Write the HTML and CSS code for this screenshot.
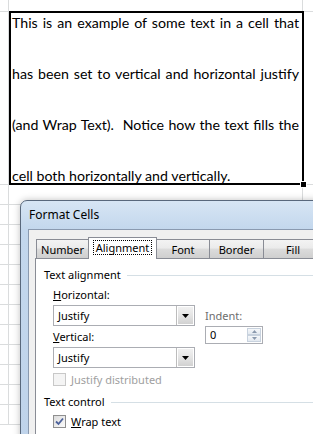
FILE: index.html
```html
<!DOCTYPE html>
<html lang="en">
<head>
    <meta charset="UTF-8">
    <meta name="viewport" content="width=device-width, initial-scale=1.0">
    <title>Format Cells - Justify</title>
    <link rel="stylesheet" href="styles.css">
</head>
<body>
    <div class="sheet">
        <div class="row row-top">
            <div class="c col-a"></div><div class="c col-b"></div><div class="c col-c"></div>
        </div>
        <div class="row row-tall">
            <div class="c col-a"></div>
            <div class="c col-b">
                <div class="cell-text">
                    <div class="line">This is an example of some text in a cell that</div>
                    <div class="line">has been set to vertical and horizontal justify</div>
                    <div class="line">(and Wrap Text).&nbsp; Notice how the text fills the</div>
                    <div class="line last">cell both horizontally and vertically.</div>
                </div>
            </div>
            <div class="c col-c"></div>
        </div>
        <div class="row"><div class="c col-a"></div><div class="c col-b"></div><div class="c col-c"></div></div>
        <div class="row"><div class="c col-a"></div><div class="c col-b"></div><div class="c col-c"></div></div>
        <div class="row"><div class="c col-a"></div><div class="c col-b"></div><div class="c col-c"></div></div>
        <div class="row"><div class="c col-a"></div><div class="c col-b"></div><div class="c col-c"></div></div>
        <div class="row"><div class="c col-a"></div><div class="c col-b"></div><div class="c col-c"></div></div>
        <div class="row"><div class="c col-a"></div><div class="c col-b"></div><div class="c col-c"></div></div>
        <div class="row"><div class="c col-a"></div><div class="c col-b"></div><div class="c col-c"></div></div>
        <div class="row"><div class="c col-a"></div><div class="c col-b"></div><div class="c col-c"></div></div>
        <div class="row"><div class="c col-a"></div><div class="c col-b"></div><div class="c col-c"></div></div>
        <div class="row"><div class="c col-a"></div><div class="c col-b"></div><div class="c col-c"></div></div>
        <div class="row"><div class="c col-a"></div><div class="c col-b"></div><div class="c col-c"></div></div>
        <div class="row"><div class="c col-a"></div><div class="c col-b"></div><div class="c col-c"></div></div>

        <!-- active cell outline -->
        <div class="selection"><span class="fill-handle"></span></div>

        <!-- Format Cells dialog -->
        <div class="dialog">
            <div class="titlebar">Format Cells</div>
            <div class="client">
                <div class="tabs">
                    <div class="tab tab-number">Number</div>
                    <div class="tab tab-align active"><span class="focus">Alignment</span></div>
                    <div class="tab tab-font">Font</div>
                    <div class="tab tab-border">Border</div>
                    <div class="tab tab-fill">Fill</div>
                </div>
                <div class="panel">
                    <div class="group"><span>Text alignment</span><span class="rule"></span></div>

                    <div class="align-row">
                        <div class="left-col">
                            <div class="label"><u>H</u>orizontal:</div>
                            <div class="combo">
                                <span class="value">Justify</span>
                                <span class="drop"><svg width="7" height="4" viewBox="0 0 7 4"><path d="M0 0h7L3.5 4z" fill="#000"/></svg></span>
                            </div>
                            <div class="label label-gap"><u>V</u>ertical:</div>
                            <div class="combo">
                                <span class="value">Justify</span>
                                <span class="drop"><svg width="7" height="4" viewBox="0 0 7 4"><path d="M0 0h7L3.5 4z" fill="#000"/></svg></span>
                            </div>
                        </div>
                        <div class="indent-col">
                            <div class="label dim">Indent:</div>
                            <div class="spin">
                                <span class="value">0</span>
                                <span class="spin-btns">
                                    <span class="spin-btn"><svg width="5" height="3" viewBox="0 0 5 3"><path d="M0 3h5L2.5 0z" fill="#8a99ad"/></svg></span>
                                    <span class="spin-btn"><svg width="5" height="3" viewBox="0 0 5 3"><path d="M0 0h5L2.5 3z" fill="#8a99ad"/></svg></span>
                                </span>
                            </div>
                        </div>
                    </div>

                    <div class="check disabled">
                        <span class="box"></span>
                        <span>Justify distributed</span>
                    </div>

                    <div class="group group-2"><span>Text control</span><span class="rule"></span></div>

                    <div class="check checked">
                        <span class="box"><svg width="9" height="9" viewBox="0 0 9 9"><path d="M1 4.5l2.5 2.5L8 1.5" fill="none" stroke="#4c619b" stroke-width="1.8"/></svg></span>
                        <span><u>W</u>rap text</span>
                    </div>
                </div>
            </div>
        </div>
    </div>
</body>
</html>
```

FILE: styles.css
```css
body {
    margin: 0;
    background: #fff;
}

.sheet {
    position: relative;
    width: 313px;
    height: 434px;
    overflow: hidden;
    font-family: Lato, "Open Sans", sans-serif;
}

/* grille du tableur */
.row {
    display: grid;
    grid-template-columns: 9px 294px 1fr;
    height: 20px;
    box-sizing: border-box;
    border-bottom: 1px solid #dadcdd;
}

.row-top {
    height: 12px;
}

.row-tall {
    height: 173px;
}

.c {
    border-right: 1px solid #dadcdd;
    box-sizing: border-box;
}

.col-c {
    border-right: none;
}

.cell-text {
    height: 100%;
    box-sizing: border-box;
    padding: 2px 3px 0 3px;
    display: flex;
    flex-direction: column;
    justify-content: space-between;
    font-size: 14.2px;
    line-height: 17px;
    color: #000;
}

.line {
    text-align: justify;
    text-align-last: justify;
    white-space: nowrap;
}

.line.last {
    text-align: left;
    text-align-last: left;
}

.selection {
    position: absolute;
    left: 9px;
    top: 11px;
    width: 295px;
    height: 174px;
    box-sizing: border-box;
    border: 2px solid #000;
}

.fill-handle {
    position: absolute;
    right: -5px;
    bottom: -5px;
    width: 5px;
    height: 5px;
    background: #000;
    border: 1px solid #fff;
}

/* boite de dialogue */
.dialog {
    position: absolute;
    left: 20px;
    top: 200px;
    width: 310px;
    height: 250px;
    border: 1px solid #59687c;
    border-radius: 7px 7px 0 0;
    background: linear-gradient(180deg, #d7e5f4 0, #c3d7ed 28px, #bfd3ea 100%);
    box-shadow: 0 0 7px rgba(0, 0, 0, 0.25);
    font-family: "Noto Sans", "Open Sans", sans-serif;
    font-size: 11px;
    color: #000;
}

.titlebar {
    height: 28px;
    padding-left: 8px;
    line-height: 28px;
    font-size: 12px;
    color: #000;
}

.client {
    margin-left: 7px;
    height: 230px;
    border: 1px solid #8a9ab0;
    background: #f0f0f0;
    padding: 9px 0 0 7px;
    box-sizing: border-box;
}

.tabs {
    display: flex;
    align-items: flex-end;
    height: 19px;
    position: relative;
    z-index: 1;
}

.tab {
    height: 19px;
    box-sizing: border-box;
    border: 1px solid #898c95;
    border-bottom: none;
    margin-right: -1px;
    background: linear-gradient(180deg, #f3f3f3 0, #ebebeb 45%, #dcdcdc 50%, #cfcfcf 100%);
    text-align: center;
    line-height: 19px;
}

.tab-number { width: 53px; }
.tab-align { width: 69px; }
.tab-font { width: 54px; }
.tab-border { width: 55px; }
.tab-fill { width: 60px; }

.tab.active {
    height: 22px;
    margin-bottom: -1px;
    background: #fff;
    padding-top: 2px;
    line-height: 16px;
}

.focus {
    display: inline-block;
    padding: 0 3px;
    outline: 1px dotted #000;
    outline-offset: -1px;
    line-height: 15px;
}

.panel {
    margin-left: -1px;
    height: 200px;
    background: #fff;
    border: 1px solid #898c95;
    border-right: none;
    padding: 9px 0 0 8px;
    box-sizing: border-box;
}

.group {
    display: flex;
    align-items: center;
    gap: 6px;
    height: 14px;
    line-height: 14px;
}

.rule {
    flex: 1;
    height: 1px;
    background: #d5dfe5;
}

.align-row {
    display: flex;
    gap: 10px;
    margin-top: 6px;
    padding-left: 9px;
}

.left-col {
    width: 142px;
}

.label {
    height: 14px;
    line-height: 14px;
    margin-bottom: 3px;
}

.label-gap {
    margin-top: 4px;
}

.dim {
    color: #6d6d6d;
}

.combo {
    display: flex;
    height: 21px;
    box-sizing: border-box;
    border: 1px solid #abadb3;
    background: #fff;
}

.combo .value {
    flex: 1;
    padding-left: 4px;
    line-height: 19px;
}

.drop {
    width: 17px;
    margin: 0;
    display: flex;
    align-items: center;
    justify-content: center;
    border-left: 1px solid #bcbcbc;
    background: linear-gradient(180deg, #f2f2f2 0, #e4e4e4 50%, #cfcfcf 100%);
    box-shadow: inset 0 0 0 1px #fff;
}

.indent-col {
    padding-top: 21px;
}

.spin {
    display: flex;
    width: 58px;
    height: 18px;
    box-sizing: border-box;
    border: 1px solid #abadb3;
    background: #fff;
}

.spin .value {
    flex: 1;
    padding-left: 4px;
    line-height: 16px;
}

.spin-btns {
    display: flex;
    flex-direction: column;
    width: 14px;
    margin: 1px;
}

.spin-btn {
    flex: 1;
    display: flex;
    align-items: center;
    justify-content: center;
    border: 1px solid #c8d2de;
    background: linear-gradient(180deg, #f6f8fa, #e3e9f0);
}

.check {
    display: flex;
    align-items: center;
    gap: 5px;
    height: 13px;
    line-height: 13px;
    margin-left: 9px;
}

.check .box {
    width: 13px;
    height: 13px;
    box-sizing: border-box;
    border: 1px solid #8f8f8f;
    background: linear-gradient(135deg, #dcdcdc, #fbfbfb);
    display: flex;
    align-items: center;
    justify-content: center;
}

.check.disabled {
    margin-top: 5px;
    color: #a0a0a0;
}

.check.disabled .box {
    border-color: #c8c8c8;
    background: #f4f4f4;
}

.group-2 {
    margin-top: 9px;
}

.check.checked {
    margin-top: 6px;
}
```
